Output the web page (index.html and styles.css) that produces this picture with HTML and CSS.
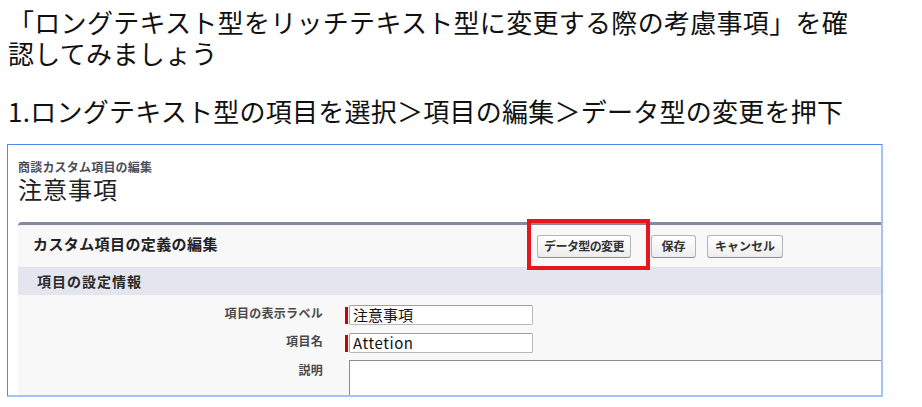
FILE: index.html
```html
<!DOCTYPE html>
<html lang="ja">
<head>
<meta charset="utf-8">
<title>ロングテキスト型からリッチテキスト型への変更</title>
<link rel="stylesheet" href="styles.css">
</head>
<body>
<div class="page">
  <p class="intro">「ロングテキスト型をリッチテキスト型に変更する際の考慮事項」を確認してみましょう</p>
  <p class="step">1.ロングテキスト型の項目を選択＞項目の編集＞データ型の変更を押下</p>
  <div class="shot">
    <div class="crumb">商談カスタム項目の編集</div>
    <div class="title">注意事項</div>
    <div class="panel">
      <div class="panel-head">
        <h2 class="panel-title">カスタム項目の定義の編集</h2>
        <div class="buttons">
          <span class="btn-wrap">
            <button class="btn btn-first">データ型の変更</button>
            <span class="highlight"></span>
          </span>
          <button class="btn btn-save">保存</button>
          <button class="btn btn-cancel">キャンセル</button>
        </div>
      </div>
      <div class="section">項目の設定情報</div>
      <div class="form">
        <div class="label">項目の表示ラベル</div>
        <div class="field"><span class="req"></span><span class="input">注意事項</span></div>
        <div class="label">項目名</div>
        <div class="field"><span class="req"></span><span class="input latin">Attetion</span></div>
        <div class="label label-desc">説明</div>
        <div class="field"><span class="textarea"></span></div>
      </div>
    </div>
  </div>
</div>
</body>
</html>
```

FILE: styles.css
```css
* { box-sizing: border-box; }

html, body {
  margin: 0;
  padding: 0;
  background: #ffffff;
}

body {
  font-family: "Noto Sans CJK JP", "Noto Sans", sans-serif;
  color: #000;
}

.page {
  padding: 6px 0 0 8px;
  width: 922px;
  height: 407px;
  overflow: hidden;
}

.intro,
.step {
  margin: 0;
  font-size: 26px;
  line-height: 31px;
  width: 852px;
  color: #111;
}

.intro {
  letter-spacing: 0.3px;
}

.step {
  margin-top: 27px;
  letter-spacing: 0.25px;
}

.shot {
  margin-top: 18px;
  margin-left: -1px;
  width: 876px;
  height: 253px;
  border-top: 1px solid #4c8cf2;
  border-left: 1px solid #4c8cf2;
  border-right: 2px solid #a3c3f8;
  border-bottom: 2px solid #a3c3f8;
  background: #fff;
  overflow: hidden;
  padding: 15px 0 0 10px;
}

.crumb {
  font-size: 12px;
  line-height: 13px;
  font-weight: bold;
  color: #4d4d57;
  letter-spacing: 0.2px;
}

.title {
  margin-top: 3px;
  font-size: 24px;
  line-height: 26px;
  color: #222;
  letter-spacing: 1px;
}

.panel {
  margin-top: 20px;
  width: 900px;
  height: 200px;
  background: #f8f8f8;
  border-top: 3px solid #818b9d;
  border-top-left-radius: 4px;
}

.panel-head {
  display: grid;
  grid-template-columns: 504px auto;
  align-items: center;
  height: 43px;
  padding-left: 15px;
  border-bottom: 1px solid #e3e3e3;
}

.panel-title {
  margin: 0;
  font-size: 15px;
  font-weight: bold;
  color: #222;
  letter-spacing: 0.4px;
  line-height: 20px;
  margin-top: -4px;
}

.buttons {
  display: flex;
  align-items: center;
}

.btn-wrap {
  position: relative;
  display: inline-flex;
}

.btn {
  font-family: "Noto Sans CJK JP", sans-serif;
  height: 23px;
  padding: 0;
  font-size: 12px;
  font-weight: bold;
  color: #333;
  background: linear-gradient(#ffffff, #ededed);
  border: 1px solid #b5b5b5;
  border-bottom-color: #8f8f8f;
  border-radius: 3px;
  line-height: 20px;
  white-space: nowrap;
  text-align: center;
}

.btn-first { width: 94px; letter-spacing: -0.6px; }
.btn-save { width: 45px; margin-left: 20px; }
.btn-cancel { width: 76px; margin-left: 11px; }

.highlight {
  position: absolute;
  left: -10px;
  top: -16px;
  width: 123px;
  height: 51px;
  border: 4px solid #e5161d;
}

.section {
  height: 27px;
  background: #e3e6ee;
  padding-left: 19px;
  font-size: 14px;
  font-weight: bold;
  line-height: 26px;
  color: #2a2a2a;
  letter-spacing: 1px;
}

.form {
  display: grid;
  grid-template-columns: 305px 1fr;
  column-gap: 22px;
  row-gap: 8px;
  padding-top: 10px;
}

.label {
  text-align: right;
  font-size: 12px;
  font-weight: bold;
  color: #4a4a4a;
  line-height: 16px;
  letter-spacing: 0.3px;
}

.label-desc {
  padding-top: 1px;
}

.field {
  display: flex;
  align-items: center;
  height: 20px;
}

.req {
  width: 3px;
  height: 17px;
  background: #c00;
}

.input {
  width: 184px;
  height: 20px;
  margin-left: 1px;
  background: #fff;
  border: 1px solid #a0a0a0;
  border-right-color: #b8b8b8;
  border-bottom-color: #b8b8b8;
  border-radius: 2px;
  padding-left: 3px;
  font-size: 15px;
  line-height: 18px;
  color: #111;
}

.latin {
  letter-spacing: 0.6px;
}

.textarea {
  display: block;
  margin-left: 4px;
  margin-top: -1px;
  width: 600px;
  height: 60px;
  background: #fff;
  border: 1px solid #8c8c8c;
  align-self: flex-start;
}
```
